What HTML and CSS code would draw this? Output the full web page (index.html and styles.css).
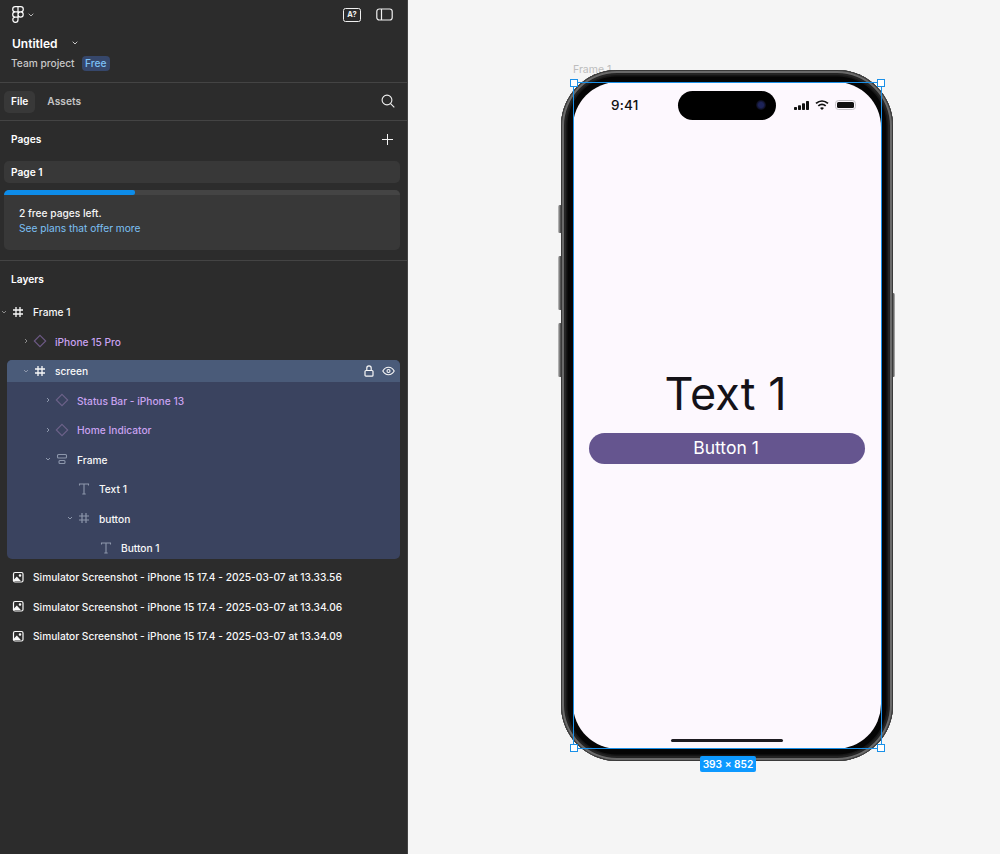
FILE: index.html
```html
<!DOCTYPE html>
<html lang="en">
<head>
<meta charset="utf-8">
<title>Untitled</title>
<link rel="stylesheet" href="styles.css">
</head>
<body>
<div class="app">
  <aside class="sidebar">
    <header class="head">
      <div class="toolbar">
        <div class="logo-wrap">
          <svg class="logo" width="12" height="17" viewBox="0 0 12 17" fill="none" stroke="#fff" stroke-width="1.2"><path d="M6 .7H3.3a2.6 2.6 0 0 0 0 5.2H6zM6 .7h2.7a2.6 2.6 0 0 1 0 5.2H6zM6 5.9H3.3a2.6 2.6 0 0 0 0 5.2H6zM6 11.1H3.3a2.6 2.6 0 1 0 2.7 2.6zM11.2 8.5a2.6 2.6 0 1 1-5.2 0 2.6 2.6 0 0 1 5.2 0z"/></svg>
          <svg class="chev" width="6" height="4" viewBox="0 0 6 4" fill="none" stroke="#b5b5b5" stroke-width="1"><path d="M.7.7 3 3l2.3-2.3"/></svg>
        </div>
        <div class="tool-icons">
          <span class="ai-badge">A?</span>
          <svg width="17" height="13" viewBox="0 0 17 13" fill="none" stroke="#f0f0f0" stroke-width="1.2"><rect x=".8" y="1" width="15.4" height="11" rx="2.5"/><path d="M5.5 1v11"/></svg>
        </div>
      </div>
      <div class="title-row">
        <span class="title">Untitled</span>
        <svg width="6" height="4" viewBox="0 0 6 4" fill="none" stroke="#c8c8c8" stroke-width="1"><path d="M.7.7 3 3l2.3-2.3"/></svg>
      </div>
      <div class="project-row">
        <span class="project">Team project</span>
        <span class="plan">Free</span>
      </div>
    </header>
    <nav class="tabs">
      <span class="tab tab-active">File</span>
      <span class="tab">Assets</span>
      <svg class="search" width="14" height="14" viewBox="0 0 14 14" fill="none" stroke="#f0f0f0" stroke-width="1.1"><circle cx="6" cy="6" r="4.9"/><path d="m9.6 9.6 3.7 3.7"/></svg>
    </nav>
    <section class="pages">
      <div class="section-head">
        <span class="heading">Pages</span>
        <svg width="11" height="11" viewBox="0 0 11 11" stroke="#f5f5f5" stroke-width="1"><path d="M5.5 0v11M0 5.5h11"/></svg>
      </div>
      <div class="page-row">Page 1</div>
      <div class="promo">
        <div class="progress"><div class="progress-fill"></div></div>
        <p class="promo-text">2 free pages left.</p>
        <p class="promo-link">See plans that offer more</p>
      </div>
    </section>
    <section class="layers">
      <div class="layers-head heading">Layers</div>
      <div class="tree">
        <div class="row lv0">
          <svg class="caret" viewBox="0 0 8 8" fill="none" stroke="#8a8a8a"><path d="M2 3l2 2 2-2"/></svg>
          <svg class="ico" viewBox="0 0 16 16" fill="none" stroke="#f8f8f8" stroke-width="1.3"><path d="M6 3v10M10 3v10M3 6h10M3 10h10"/></svg>
          <span class="lbl lbl-top">Frame 1</span>
        </div>
        <div class="row lv1">
          <svg class="caret" viewBox="0 0 8 8" fill="none" stroke="#8a8a8a"><path d="M3 2l2 2-2 2"/></svg>
          <svg class="ico" viewBox="0 0 16 16" fill="none" stroke="#6e5a86" stroke-width="1.1"><path d="M8 2.3 13.7 8 8 13.7 2.3 8z"/></svg>
          <span class="lbl purple">iPhone 15 Pro</span>
        </div>
        <div class="group">
          <div class="row lv1 row-head">
            <svg class="caret" viewBox="0 0 8 8" fill="none" stroke="#8d97ac"><path d="M2 3l2 2 2-2"/></svg>
            <svg class="ico" viewBox="0 0 16 16" fill="none" stroke="#f8f8f8" stroke-width="1.3"><path d="M6 3v10M10 3v10M3 6h10M3 10h10"/></svg>
            <span class="lbl">screen</span>
            <span class="row-actions">
              <svg width="10" height="12" viewBox="0 0 10 12" fill="none" stroke="#f8f8f8" stroke-width="1.2"><rect x="1" y="5.5" width="8" height="5.7" rx="1"/><path d="M2.800 5.500V3a2.200 2.200 0 0 1 4.400 0v2.500"/></svg>
              <svg width="13" height="10" viewBox="0 0 13 10" fill="none" stroke="#f8f8f8" stroke-width="1.1"><path d="M.8 5C2.200 2.600 4.200 1.300 6.500 1.300S10.800 2.600 12.200 5C10.800 7.400 8.800 8.700 6.500 8.700S2.200 7.400.8 5z"/><circle cx="6.500" cy="5" r="1.500"/></svg>
            </span>
          </div>
          <div class="row lv2">
            <svg class="caret" viewBox="0 0 8 8" fill="none" stroke="#8d97ac"><path d="M3 2l2 2-2 2"/></svg>
            <svg class="ico" viewBox="0 0 16 16" fill="none" stroke="#6d628a" stroke-width="1.1"><path d="M8 2.300 13.700 8 8 13.700 2.300 8z"/></svg>
            <span class="lbl purple">Status Bar - iPhone 13</span>
          </div>
          <div class="row lv2">
            <svg class="caret" viewBox="0 0 8 8" fill="none" stroke="#8d97ac"><path d="M3 2l2 2-2 2"/></svg>
            <svg class="ico" viewBox="0 0 16 16" fill="none" stroke="#6d628a" stroke-width="1.1"><path d="M8 2.300 13.700 8 8 13.700 2.300 8z"/></svg>
            <span class="lbl purple">Home Indicator</span>
          </div>
          <div class="row lv2">
            <svg class="caret" viewBox="0 0 8 8" fill="none" stroke="#8d97ac"><path d="M2 3l2 2 2-2"/></svg>
            <svg class="ico" viewBox="0 0 16 16" fill="none" stroke="#8d97ac" stroke-width="1.1"><rect x="3.500" y="3.500" width="9" height="3.500" rx="1"/><rect x="5" y="9.500" width="6" height="3" rx="1"/></svg>
            <span class="lbl">Frame</span>
          </div>
          <div class="row lv3">
            <span class="caret"></span>
            <svg class="ico" viewBox="0 0 16 16" fill="none" stroke="#8d97ac" stroke-width="1.1"><path d="M3.500 4.500V3h9v1.500M8 3v10M6.300 13h3.400"/></svg>
            <span class="lbl">Text 1</span>
          </div>
          <div class="row lv3">
            <svg class="caret" viewBox="0 0 8 8" fill="none" stroke="#8d97ac"><path d="M2 3l2 2 2-2"/></svg>
            <svg class="ico" viewBox="0 0 16 16" fill="none" stroke="#8d97ac" stroke-width="1.2"><path d="M6 3v10M10 3v10M3 6h10M3 10h10"/></svg>
            <span class="lbl">button</span>
          </div>
          <div class="row lv4">
            <span class="caret"></span>
            <svg class="ico" viewBox="0 0 16 16" fill="none" stroke="#8d97ac" stroke-width="1.1"><path d="M3.500 4.500V3h9v1.500M8 3v10M6.300 13h3.400"/></svg>
            <span class="lbl">Button 1</span>
          </div>
        </div>
        <div class="row lv0">
          <span class="caret"></span>
          <svg class="ico" viewBox="0 0 16 16" fill="none" stroke="#f8f8f8" stroke-width="1.2"><rect x="3.500" y="3.500" width="9.500" height="9.500" rx="1.500"/><circle cx="10" cy="6.500" r=".7" fill="#f8f8f8"/><path d="M4 11.500 6.800 8.500l2.700 3z" fill="#f8f8f8"/></svg>
          <span class="lbl">Simulator Screenshot - iPhone 15 17.4 - 2025-03-07 at 13.33.56</span>
        </div>
        <div class="row lv0">
          <span class="caret"></span>
          <svg class="ico" viewBox="0 0 16 16" fill="none" stroke="#f8f8f8" stroke-width="1.2"><rect x="3.500" y="3.500" width="9.500" height="9.500" rx="1.500"/><circle cx="10" cy="6.500" r=".7" fill="#f8f8f8"/><path d="M4 11.500 6.800 8.500l2.700 3z" fill="#f8f8f8"/></svg>
          <span class="lbl">Simulator Screenshot - iPhone 15 17.4 - 2025-03-07 at 13.34.06</span>
        </div>
        <div class="row lv0">
          <span class="caret"></span>
          <svg class="ico" viewBox="0 0 16 16" fill="none" stroke="#f8f8f8" stroke-width="1.2"><rect x="3.500" y="3.500" width="9.500" height="9.500" rx="1.500"/><circle cx="10" cy="6.500" r=".7" fill="#f8f8f8"/><path d="M4 11.500 6.800 8.500l2.700 3z" fill="#f8f8f8"/></svg>
          <span class="lbl">Simulator Screenshot - iPhone 15 17.4 - 2025-03-07 at 13.34.09</span>
        </div>
      </div>
    </section>
  </aside>
  <main class="canvas">
    <span class="frame-name">Frame 1</span>
    <span class="hw hw-l1"></span>
    <span class="hw hw-l2"></span>
    <span class="hw hw-l3"></span>
    <span class="hw hw-r"></span>
    <div class="phone">
      <div class="screen">
        <div class="status">
          <span class="time">9:41</span>
          <div class="island"><span class="camera"></span></div>
          <div class="status-icons">
            <svg width="15" height="9" viewBox="0 0 15 9" fill="#111"><rect x="0" y="6" width="3" height="3" rx=".7"/><rect x="4" y="4.300" width="3" height="4.700" rx=".7"/><rect x="8" y="2.300" width="3" height="6.700" rx=".7"/><rect x="12" y="0" width="3" height="9" rx=".7"/></svg>
            <svg width="14" height="10" viewBox="0 0 14 10" fill="none" stroke="#111" stroke-width="1.800"><path d="M1 3.400C4.600.3 9.400.3 13 3.400M3.300 5.900c2.200-1.800 5.200-1.800 7.400 0"/><path d="M5 7.900 7 10l2-2.100C7.800 7 6.200 7 5 7.900z" fill="#111" stroke="none"/></svg>
            <span class="battery"><span class="battery-level"></span></span>
          </div>
        </div>
        <div class="content">
          <div class="big-text">Text 1</div>
          <div class="cta">Button 1</div>
        </div>
        <div class="home-bar"></div>
      </div>
    </div>
    <div class="selection">
      <span class="handle h-tl"></span>
      <span class="handle h-tr"></span>
      <span class="handle h-bl"></span>
      <span class="handle h-br"></span>
      <span class="dims">393 × 852</span>
    </div>
  </main>
</div>
</body>
</html>
```
FILE: styles.css
```css
* { box-sizing: border-box; }
html, body { margin: 0; height: 100%; overflow: hidden; }
body { font-family: Inter, "Liberation Sans", sans-serif; -webkit-font-smoothing: antialiased; }
p { margin: 0; }
svg { display: block; flex: none; }

.app { display: flex; width: 1000px; height: 854px; }

.sidebar { width: 408px; flex: none; background: #2c2c2c; border-right: 1px solid #444; color: #fff; font-size: 10.2px; font-weight: 500; }

.head { height: 83px; border-bottom: 1px solid #444; padding: 6px 14px 0 11px; }
.toolbar { display: flex; justify-content: space-between; align-items: center; height: 17px; }
.logo-wrap { display: flex; align-items: center; gap: 4px; padding-left: 1px; }
.tool-icons { display: flex; align-items: center; gap: 15px; }
.ai-badge { width: 18px; height: 14px; border: 1.200px solid #f0f0f0; border-radius: 2.500px; font-size: 7.500px; font-weight: 700; line-height: 12px; text-align: center; color: #f0f0f0; }
.title-row { display: flex; align-items: center; gap: 14px; height: 20px; margin-top: 10px; padding-left: 1px; }
.title { font-size: 12px; font-weight: 600; color: #fff; }
.project-row { display: flex; align-items: center; gap: 7px; height: 20px; }
.project { color: #c8c8c8; }
.plan { height: 15px; padding: 0 3.500px; border-radius: 4px; background: #36476b; color: #7cc0f5; line-height: 15px; }

.tabs { display: flex; align-items: center; height: 38px; border-bottom: 1px solid #444; padding: 0 12px 0 4px; }
.tab { height: 22px; line-height: 21px; padding: 0 7px; border-radius: 5px; color: #c4c4c4; font-weight: 600; margin-right: 5px; }
.tab-active { background: #383838; color: #fff; }
.search { margin-left: auto; margin-top: -2px; }

.pages { height: 140px; border-bottom: 1px solid #444; padding: 0 7px 0 4px; }
.section-head { display: flex; align-items: center; justify-content: space-between; height: 36px; margin-bottom: 4px; padding: 0 7px 0 7px; }
.heading { font-weight: 600; color: #fff; }
.page-row { height: 22px; line-height: 23px; padding-left: 7px; border-radius: 5px; background: #383838; font-weight: 600; }
.promo { height: 60px; margin-top: 7px; border-radius: 5px; background: #383838; overflow: hidden; }
.progress { height: 5px; background: #444; }
.progress-fill { width: 131px; height: 100%; background: #0d8ce9; border-radius: 0 2px 2px 0; }
.promo-text { margin: 11px 0 0 15px; line-height: 15px; color: #f5f5f5; }
.promo-link { margin-left: 15px; line-height: 15px; color: #7cc0f5; font-weight: 400; }

.layers-head { height: 40px; line-height: 37px; padding-left: 11px; }
.tree { display: flex; flex-direction: column; gap: 7.450px; }
.row { display: flex; align-items: center; height: 22px; gap: 7px; flex: none; }
.caret { width: 8px; height: 8px; margin-right: -5px; flex: none; }
.ico { width: 16px; height: 16px; }
.lbl { color: #f8f8f8; white-space: nowrap; padding-top: 1px; }
.lbl-top { padding-top: 0; }
.purple { color: #c9a2f0; }
.lv0 { padding-left: 0; }
.lv1 { padding-left: 22px; }
.lv2 { padding-left: 37px; }
.lv3 { padding-left: 59px; }
.lv4 { padding-left: 81px; }

.group { display: flex; flex-direction: column; gap: 7.450px; margin: 0 7px; background: #3a435f; border-radius: 5px; overflow: hidden; }
.group .lv1 { padding-left: 15px; }
.row-head { background: #4a5b79; }
.row-actions { display: flex; align-items: center; gap: 8px; margin-left: auto; padding-right: 5px; }

.canvas { position: relative; flex: 1; background: #f5f5f5; }
.frame-name { position: absolute; left: 165px; top: 63px; font-size: 10.500px; color: #bdbdbd; }
.phone { position: absolute; left: 153px; top: 70px; width: 332px; height: 691px; border-radius: 56px; background: #050505; box-shadow: inset 0 0 0 1px #3a3a3a, inset 0 0 0 3px #6a6a6a, inset 0 0 0 5px #242424, inset 0 0 0 6.500px #161616; padding: 12px; }
.screen { position: relative; display: flex; flex-direction: column; height: 100%; background: #fdf8fe; border-radius: 45px; overflow: hidden; }
.status { position: relative; flex: none; height: 47px; }
.time { position: absolute; left: 38px; top: 15px; font-size: 13.500px; font-weight: 500; line-height: 16px; letter-spacing: .2px; color: #111; }
.island { position: absolute; left: 105px; top: 9px; width: 98px; height: 29px; border-radius: 15px; background: #000; }
.camera { position: absolute; right: 10px; top: 9px; width: 10px; height: 10px; border-radius: 50%; background: radial-gradient(circle, #1d2358 0 35%, #0a0a14 70%); }
.status-icons { position: absolute; left: 221px; top: 18px; display: flex; align-items: center; gap: 6px; }
.battery { position: relative; width: 21px; height: 10px; padding: 1px; border: 1px solid #c4c2c6; border-radius: 3.500px; }
.battery-level { display: block; height: 100%; background: #111; border-radius: 1.500px; }
.content { flex: none; display: flex; flex-direction: column; align-items: center; margin-top: 238px; gap: 12px; padding: 0 16px; }
.big-text { font-size: 45px; line-height: 54px; font-weight: 400; color: #141218; padding-right: 3px; }
.cta { width: 100%; height: 31px; line-height: 30px; text-align: center; border-radius: 16px; background: #65558f; color: #fff; font-size: 17.500px; padding-right: 2px; }
.home-bar { position: absolute; left: 98px; bottom: 7px; width: 112px; height: 3px; border-radius: 2px; background: #1d1b20; }

.selection { position: absolute; left: 165px; top: 82px; width: 309px; height: 667px; border: 1px solid #1a90e8; pointer-events: none; }
.handle { position: absolute; width: 8px; height: 8px; background: #fff; border: 1px solid #1a90e8; }
.h-tl { left: -4px; top: -4px; }
.h-tr { right: -4px; top: -4px; }
.h-bl { left: -4px; bottom: -4px; }
.h-br { right: -4px; bottom: -4px; }
.dims { position: absolute; left: 126px; top: 673px; width: 56px; height: 16px; line-height: 16px; text-align: center; border-radius: 2px; background: #0d99ff; color: #fff; font-size: 10.200px; font-weight: 600; white-space: nowrap; }

.hw { position: absolute; width: 4px; background: linear-gradient(90deg, #c8c8c8, #555 60%, #333); border-radius: 1.500px; }
.hw-l1 { left: 150px; top: 205px; height: 28px; }
.hw-l2 { left: 150px; top: 256px; height: 54px; }
.hw-l3 { left: 150px; top: 323px; height: 54px; }
.hw-r { left: 484px; top: 293px; height: 84px; width: 3px; background: linear-gradient(90deg, #333, #666, #bbb); }
```
